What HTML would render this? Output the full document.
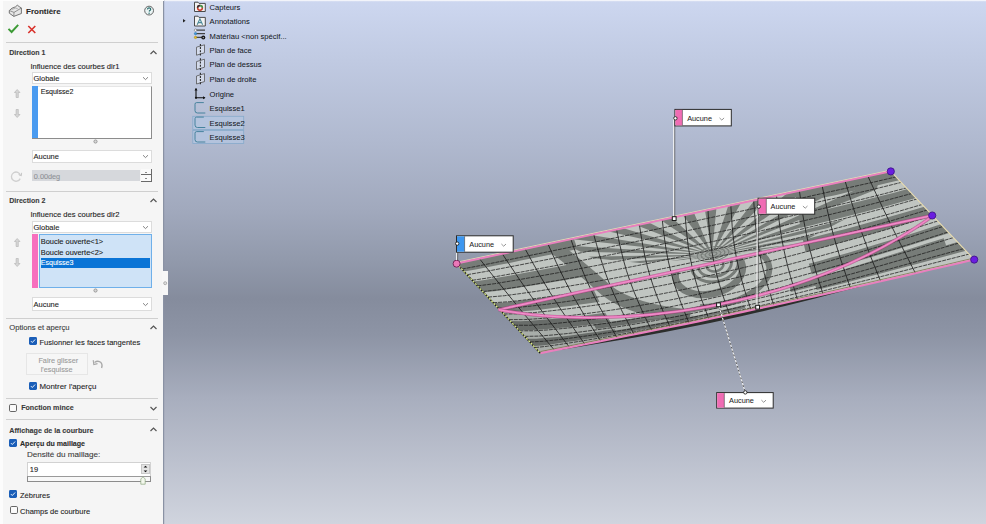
<!DOCTYPE html>
<html><head><meta charset="utf-8"><style>
html,body{margin:0;padding:0;width:986px;height:524px;overflow:hidden;background:#f4f4f4;}
.t{position:absolute;white-space:nowrap;font-family:'Liberation Sans',sans-serif;line-height:normal;-webkit-text-stroke:0.1px currentColor;}
.b{position:absolute;}
#vp{position:absolute;left:163px;top:0;width:823px;height:524px;overflow:hidden;}
</style></head><body>
<div id="vp"><svg width="823" height="524" viewBox="163 0 823 524" style="position:absolute;left:0;top:0">
<defs>
<linearGradient id="bg" x1="0" y1="0" x2="0" y2="524" gradientUnits="userSpaceOnUse">
<stop offset="0" stop-color="#cdd7f0"/>
<stop offset="0.115" stop-color="#c0cae2"/>
<stop offset="0.27" stop-color="#b0b9cf"/>
<stop offset="0.40" stop-color="#a1a9bd"/>
<stop offset="0.50" stop-color="#9199ab"/>
<stop offset="0.57" stop-color="#858c9d"/>
<stop offset="0.64" stop-color="#8d94a5"/>
<stop offset="0.76" stop-color="#a8aebe"/>
<stop offset="0.88" stop-color="#bcc1ce"/>
<stop offset="1" stop-color="#d0d4de"/>
</linearGradient>
<clipPath id="surf"><polygon points="456.6,263.5 890.8,171.4 974.2,259.6 959.7,263.0 945.3,266.4 930.8,269.7 916.3,273.1 901.9,276.5 887.4,279.8 873.0,283.1 858.5,286.4 844.0,289.7 829.6,293.0 815.1,296.2 800.6,299.4 786.2,302.6 771.7,305.8 757.2,308.9 742.8,312.0 728.3,315.1 713.9,318.1 699.4,321.2 684.9,324.2 670.5,327.1 656.0,330.1 641.5,333.0 627.1,335.9 612.6,338.9 598.2,341.7 583.7,344.6 569.2,347.5 554.8,350.3 540.3,353.2"/></clipPath>
</defs>
<rect x="163" y="0" width="823" height="524" fill="url(#bg)"/>
<rect x="163" y="0" width="823" height="1.2" fill="#f2f4fa"/>
<rect x="163" y="0" width="1.2" height="524" fill="#8a92a4"/>
<g clip-path="url(#surf)">
<rect x="440" y="160" width="546" height="200" fill="#c0c5c1"/>
<clipPath id="upper"><polygon points="566,244 580,160 885,160 872,205 800,243 712,258 640,263 592,258"/></clipPath>
<g clip-path="url(#upper)"><g transform="translate(712 254.5) rotate(-9) scale(1 0.36)"><path d="M0 0 L697.0 64.6 L688.1 128.6 Z M0 0 L673.3 191.6 L652.7 252.9 Z M0 0 L626.6 312.0 L595.2 368.5 Z M0 0 L558.6 421.8 L517.3 471.6 Z M0 0 L471.6 517.3 L421.8 558.6 Z M0 0 L368.5 595.2 L312.0 626.6 Z M0 0 L252.9 652.7 L191.6 673.3 Z M0 0 L128.6 688.1 L64.6 697.0 Z M0 0 L0.0 700.0 L-64.6 697.0 Z M0 0 L-128.6 688.1 L-191.6 673.3 Z M0 0 L-252.9 652.7 L-312.0 626.6 Z M0 0 L-368.5 595.2 L-421.8 558.6 Z M0 0 L-471.6 517.3 L-517.3 471.6 Z M0 0 L-558.6 421.8 L-595.2 368.5 Z M0 0 L-626.6 312.0 L-652.7 252.9 Z M0 0 L-673.3 191.6 L-688.1 128.6 Z M0 0 L-697.0 64.6 L-700.0 0.0 Z M0 0 L-697.0 -64.6 L-688.1 -128.6 Z M0 0 L-673.3 -191.6 L-652.7 -252.9 Z M0 0 L-626.6 -312.0 L-595.2 -368.5 Z M0 0 L-558.6 -421.8 L-517.3 -471.6 Z M0 0 L-471.6 -517.3 L-421.8 -558.6 Z M0 0 L-368.5 -595.2 L-312.0 -626.6 Z M0 0 L-252.9 -652.7 L-191.6 -673.3 Z M0 0 L-128.6 -688.1 L-64.6 -697.0 Z M0 0 L-0.0 -700.0 L64.6 -697.0 Z M0 0 L128.6 -688.1 L191.6 -673.3 Z M0 0 L252.9 -652.7 L312.0 -626.6 Z M0 0 L368.5 -595.2 L421.8 -558.6 Z M0 0 L471.6 -517.3 L517.3 -471.6 Z M0 0 L558.6 -421.8 L595.2 -368.5 Z M0 0 L626.6 -312.0 L652.7 -252.9 Z M0 0 L673.3 -191.6 L688.1 -128.6 Z M0 0 L697.0 -64.6 L700.0 -0.0 Z" fill="#777c78"/></g></g>
<ellipse cx="713" cy="254" rx="4.0" ry="1.75" fill="none" stroke="#777c78" stroke-width="1" transform="rotate(-10 713 254)"/>
<ellipse cx="713" cy="254" rx="8.0" ry="3.5" fill="none" stroke="#777c78" stroke-width="1" transform="rotate(-10 713 254)"/>
<ellipse cx="713" cy="254" rx="12.0" ry="5.25" fill="none" stroke="#777c78" stroke-width="1" transform="rotate(-10 713 254)"/>
<ellipse cx="713" cy="254" rx="16.0" ry="7.0" fill="none" stroke="#777c78" stroke-width="1" transform="rotate(-10 713 254)"/>
<path d="M456.6 263.5 L468.3 261.0 L480.0 258.5 L491.8 256.0 L503.5 253.6 L515.2 251.1 L526.9 248.6 L538.7 246.1 L550.4 243.6 L562.1 241.1 L573.8 238.6 L577.5 249.1 L566.1 251.5 L554.8 253.8 L543.5 256.1 L532.2 258.3 L520.9 260.6 L509.6 262.9 L498.3 265.1 L487.0 267.3 L475.6 269.5 L464.1 271.6Z M473.3 281.4 L484.6 279.9 L495.5 278.1 L506.4 276.2 L517.2 274.2 L528.0 272.3 L538.8 270.3 L549.6 268.2 L560.4 266.2 L571.2 264.1 L582.1 262.0 L587.6 276.0 L577.2 277.9 L566.8 279.7 L556.5 281.5 L546.2 283.3 L535.9 285.0 L525.6 286.6 L515.3 288.2 L504.8 289.8 L494.3 291.2 L483.4 292.2Z M493.4 303.0 L504.2 302.5 L514.3 301.5 L524.3 300.3 L534.3 299.0 L544.2 297.7 L554.0 296.3 L563.9 294.8 L573.8 293.3 L583.8 291.7 L593.8 290.0 L599.5 301.7 L589.8 303.2 L580.1 304.5 L570.5 305.9 L560.9 307.1 L551.3 308.3 L541.7 309.4 L532.1 310.4 L522.3 311.2 L512.4 311.9 L501.8 311.9Z M510.2 320.9 L520.6 321.2 L530.2 320.8 L539.7 320.1 L549.1 319.3 L558.4 318.4 L567.7 317.4 L577.1 316.4 L586.4 315.2 L595.8 314.0 L605.3 312.7 L610.4 321.9 L601.2 323.1 L592.0 324.3 L582.9 325.5 L573.9 326.5 L564.9 327.4 L555.8 328.3 L546.8 329.1 L537.7 329.7 L528.5 330.2 L518.5 329.9Z M526.9 338.8 L536.1 338.8 L544.8 338.1 L553.4 337.3 L562.0 336.4 L570.6 335.4 L579.3 334.3 L588.0 333.1 L596.8 331.9 L605.7 330.6 L614.7 329.3 L617.4 334.0 L608.6 335.5 L600.0 336.9 L591.4 338.3 L583.0 339.6 L574.6 340.9 L566.4 342.1 L558.2 343.3 L550.1 344.4 L541.9 345.4 L533.6 346.0Z" fill="#777c78"/>
<clipPath id="lower"><polygon points="600,288.5 800,245 800,340 600,340"/></clipPath>
<g clip-path="url(#lower)">
<ellipse cx="715" cy="265" rx="8.6" ry="6.3" fill="none" stroke="#777c78" stroke-width="2.6" transform="rotate(-12 715 265)"/>
<ellipse cx="715" cy="265" rx="16.6" ry="11.4" fill="none" stroke="#777c78" stroke-width="2.8" transform="rotate(-12 715 265)"/>
<ellipse cx="715" cy="265" rx="23.5" ry="16.6" fill="none" stroke="#777c78" stroke-width="3.0" transform="rotate(-12 715 265)"/>
<ellipse cx="709" cy="272" rx="34" ry="22" fill="none" stroke="#777c78" stroke-width="7" transform="rotate(-12 709 272)"/>
</g>
<clipPath id="lower3"><polygon points="700,300 760,250 900,250 900,340 700,340"/></clipPath>
<g clip-path="url(#lower3)"><ellipse cx="712" cy="276" rx="58" ry="30" fill="none" stroke="#777c78" stroke-width="6" transform="rotate(-10 712 276)"/></g>
<path d="M552 246 C570 258 590 276 606 290 C622 303 648 312 690 316" fill="none" stroke="#777c78" stroke-width="13"/>
<path d="M593.4 324.2 L601.9 323.1 L610.4 321.9 L619.0 320.6 L627.7 319.3 L636.5 317.9 L645.4 316.4 L654.4 314.8 L663.5 313.1 L672.7 311.4 L682.1 309.5 L691.6 307.6 L701.2 305.6 L711.0 303.4 L720.9 301.2 L731.1 298.9 L741.4 296.4 L742.9 301.2 L732.7 303.6 L722.6 305.9 L712.7 308.1 L702.9 310.2 L693.3 312.2 L683.9 314.1 L674.7 316.0 L665.5 317.7 L656.5 319.4 L647.6 321.0 L638.8 322.5 L630.2 323.9 L621.6 325.3 L613.1 326.5 L604.7 327.8 L596.3 328.9Z M598.9 333.1 L607.1 331.8 L615.4 330.6 L623.8 329.2 L632.2 327.8 L640.8 326.3 L649.5 324.8 L658.3 323.2 L667.2 321.5 L676.3 319.8 L685.5 317.9 L694.8 316.0 L704.4 314.0 L714.0 311.9 L723.9 309.7 L734.0 307.5 L744.2 305.1 L745.3 308.3 L735.0 310.6 L725.0 312.8 L715.2 314.9 L705.5 317.0 L696.0 319.0 L686.7 320.9 L677.6 322.7 L668.6 324.5 L659.7 326.2 L651.0 327.9 L642.4 329.5 L633.9 331.0 L625.6 332.5 L617.4 334.0 L609.2 335.3 L601.2 336.7Z" fill="#777c78"/>
<path d="M795.3 191.7 L804.8 189.6 L814.4 187.6 L823.9 185.6 L833.5 183.6 L843.0 181.5 L852.6 179.5 L862.1 177.5 L871.7 175.5 L881.2 173.4 L890.8 171.4 L899.1 180.2 L887.3 183.1 L876.8 185.6 L866.5 188.0 L856.4 190.3 L846.3 192.6 L836.3 194.9 L826.4 197.1 L816.5 199.3 L806.6 201.5 L796.8 203.7Z M798.5 215.8 L808.6 213.5 L818.7 211.1 L828.9 208.7 L839.2 206.2 L849.6 203.7 L860.2 201.2 L870.9 198.5 L881.9 195.8 L893.3 192.9 L907.5 189.0 L915.8 197.9 L899.4 202.6 L887.1 206.0 L875.4 209.0 L864.1 212.0 L853.1 214.8 L842.3 217.5 L831.6 220.2 L821.1 222.8 L810.8 225.4 L800.5 227.8Z M802.9 239.9 L813.3 237.3 L823.9 234.6 L834.6 231.8 L845.6 228.9 L856.7 225.9 L868.2 222.8 L880.0 219.6 L892.3 216.1 L905.5 212.3 L924.2 206.7 L932.5 215.5 L911.7 222.0 L897.6 226.3 L884.7 230.1 L872.4 233.6 L860.6 237.0 L849.1 240.2 L837.9 243.3 L826.9 246.3 L816.2 249.2 L805.6 252.0Z M808.8 263.8 L819.4 260.9 L830.2 257.8 L841.4 254.7 L852.8 251.4 L864.5 248.0 L876.7 244.3 L889.4 240.5 L902.9 236.4 L917.8 231.7 L940.8 224.3 L949.2 233.1 L923.8 241.1 L908.1 246.0 L894.0 250.3 L880.9 254.3 L868.3 258.0 L856.3 261.5 L844.7 264.9 L833.5 268.1 L822.5 271.2 L811.8 274.2Z M814.5 283.0 L825.2 280.0 L836.3 277.0 L847.8 273.8 L859.6 270.5 L871.9 267.0 L884.7 263.4 L898.3 259.4 L913.0 255.1 L929.6 250.2 L957.5 242.0 L965.9 250.8 L935.3 259.0 L917.7 263.7 L902.3 267.8 L888.2 271.6 L875.0 275.0 L862.5 278.3 L850.4 281.4 L838.8 284.4 L827.6 287.3 L816.7 290.0Z" fill="#777c78"/>
<path d="M790 288 C830 280 880 262 945 242" fill="none" stroke="#777c78" stroke-width="8"/>
</g>
<path d="M497 306 L540.3 353.2 L700 318 L690 314 Q600 330 497 306 Z" fill="#000" fill-opacity="0.12" clip-path="url(#surf)"/>
<path d="M479.5 258.7 L485.9 266.8 L492.3 274.9 L498.8 283.0 L505.4 291.1 L512.0 299.3 L518.6 307.4 L525.3 315.5 L531.8 323.2 L538.0 330.6 L543.9 337.6 L549.4 344.2 L554.7 350.4 M502.3 253.8 L508.0 262.4 L513.8 271.0 L519.6 279.6 L525.5 288.2 L531.5 296.7 L537.7 305.3 L544.0 313.9 L550.0 321.9 L555.6 329.2 L560.7 335.9 L565.4 342.0 L569.6 347.4 M525.2 249.0 L530.1 258.0 L535.1 267.0 L540.2 276.0 L545.5 285.0 L551.0 294.0 L556.7 303.0 L562.5 311.9 L568.0 320.1 L573.1 327.5 L577.6 334.0 L581.6 339.6 L584.9 344.4 M548.0 244.1 L552.2 253.5 L556.4 262.8 L560.9 272.2 L565.5 281.6 L570.4 291.0 L575.6 300.3 L581.0 309.6 L586.1 318.0 L590.7 325.4 L594.7 331.7 L598.1 337.0 L600.8 341.2 M570.9 239.3 L574.3 249.0 L577.8 258.7 L581.6 268.3 L585.6 278.0 L590.0 287.7 L594.7 297.4 L599.7 307.0 L604.4 315.6 L608.6 323.0 L612.1 329.2 L615.0 334.2 L617.2 337.9 M593.7 234.4 L596.5 244.4 L599.3 254.4 L602.5 264.3 L605.9 274.3 L609.7 284.3 L614.0 294.3 L618.5 304.1 L622.9 312.9 L626.7 320.3 L629.9 326.4 L632.4 331.1 L634.2 334.5 M616.6 229.6 L618.7 239.8 L621.0 250.0 L623.5 260.2 L626.4 270.4 L629.8 280.6 L633.6 290.8 L637.8 300.9 L641.7 309.8 L645.2 317.3 L648.1 323.3 L650.4 327.8 L651.9 330.9 M639.4 224.7 L641.0 235.1 L642.8 245.5 L644.8 255.9 L647.3 266.3 L650.2 276.7 L653.6 287.1 L657.4 297.4 L661.0 306.4 L664.2 313.9 L666.9 319.8 L668.9 324.3 L670.2 327.2 M662.3 219.9 L663.4 230.4 L664.8 240.9 L666.4 251.5 L668.5 262.0 L671.0 272.5 L674.0 283.0 L677.5 293.4 L680.8 302.5 L683.8 310.1 L686.2 316.1 L688.0 320.5 L689.2 323.3 M685.1 215.0 L686.0 225.6 L687.0 236.2 L688.3 246.8 L690.1 257.4 L692.3 268.0 L695.0 278.6 L698.1 289.1 L701.2 298.3 L704.0 305.9 L706.2 311.9 L707.9 316.3 L708.9 319.2 M708.0 210.2 L708.6 220.8 L709.5 231.4 L710.6 242.0 L712.1 252.6 L714.1 263.3 L716.5 273.9 L719.4 284.4 L722.3 293.6 L724.8 301.2 L726.9 307.3 L728.5 311.8 L729.6 314.8 M730.8 205.3 L731.5 215.9 L732.2 226.5 L733.2 237.0 L734.6 247.6 L736.5 258.2 L738.8 268.7 L741.5 279.2 L744.1 288.4 L746.5 296.1 L748.5 302.3 L750.1 307.0 L751.1 310.2 M753.7 200.5 L754.4 210.9 L755.2 221.4 L756.3 231.8 L757.7 242.3 L759.5 252.7 L761.7 263.2 L764.3 273.5 L766.8 282.7 L769.1 290.5 L771.1 296.8 L772.7 301.8 L773.8 305.3 M776.5 195.6 L777.5 205.9 L778.6 216.2 L779.8 226.4 L781.4 236.7 L783.3 246.9 L785.5 257.2 L788.0 267.4 L790.5 276.5 L792.8 284.3 L794.8 290.8 L796.4 296.1 L797.7 300.1 M799.4 190.8 L800.8 200.8 L802.2 210.8 L803.8 220.8 L805.7 230.8 L807.8 240.8 L810.2 250.8 L812.8 260.7 L815.4 269.7 L817.8 277.5 L819.9 284.3 L821.7 289.9 L823.1 294.4 M822.2 185.9 L824.2 195.6 L826.2 205.2 L828.4 214.9 L830.7 224.5 L833.2 234.2 L835.9 243.8 L838.8 253.4 L841.6 262.2 L844.3 270.1 L846.6 277.1 L848.7 283.1 L850.5 288.2 M845.1 181.1 L847.9 190.3 L850.7 199.5 L853.6 208.7 L856.7 217.9 L859.8 227.1 L863.1 236.3 L866.5 245.4 L869.7 254.0 L872.8 261.9 L875.7 269.1 L878.3 275.5 L880.7 281.3 M867.9 176.2 L871.9 184.8 L875.9 193.4 L880.0 202.0 L884.1 210.6 L888.2 219.2 L892.4 227.8 L896.7 236.4 L900.8 244.6 L904.8 252.4 L908.6 259.8 L912.1 266.7 L915.5 273.3" stroke="#161616" stroke-width="0.8" fill="none" clip-path="url(#surf)"/>
<path d="M461.8 269.1 L479.6 265.7 L497.3 262.1 L514.9 258.5 L532.6 254.9 L550.2 251.3 L567.9 247.7 L585.5 244.0 L603.2 240.3 L621.0 236.6 L638.7 232.9 L656.6 229.2 L674.4 225.4 L692.4 221.6 L710.4 217.7 L728.4 213.9 L746.6 210.0 L764.8 206.0 L783.0 202.1 L801.4 198.1 L819.8 194.0 L838.4 189.9 L857.0 185.8 L875.9 181.6 L896.0 176.9 M467.1 274.7 L484.6 271.7 L501.8 268.4 L519.0 265.1 L536.2 261.7 L553.4 258.3 L570.6 254.9 L587.9 251.4 L605.2 247.9 L622.6 244.3 L640.0 240.7 L657.6 237.0 L675.2 233.3 L693.0 229.5 L710.9 225.7 L728.9 221.8 L747.1 217.8 L765.4 213.8 L783.9 209.7 L802.5 205.6 L821.2 201.3 L840.2 197.0 L859.5 192.5 L879.2 187.9 L901.2 182.4 M472.3 280.3 L489.5 277.7 L506.4 274.7 L523.1 271.7 L539.9 268.5 L556.7 265.4 L573.4 262.1 L590.3 258.8 L607.2 255.4 L624.3 252.0 L641.4 248.5 L658.7 244.9 L676.2 241.2 L693.8 237.5 L711.6 233.7 L729.6 229.7 L747.8 225.7 L766.2 221.6 L784.8 217.4 L803.6 213.1 L822.7 208.6 L842.1 204.0 L861.9 199.3 L882.4 194.2 L906.4 187.9 M477.5 285.9 L494.5 283.7 L511.0 281.0 L527.3 278.2 L543.7 275.3 L560.0 272.4 L576.4 269.3 L592.9 266.2 L609.5 263.0 L626.2 259.7 L643.0 256.3 L660.1 252.8 L677.3 249.2 L694.8 245.4 L712.5 241.6 L730.4 237.7 L748.6 233.6 L767.0 229.4 L785.8 225.0 L804.8 220.5 L824.3 215.9 L844.1 211.1 L864.4 206.0 L885.7 200.5 L911.7 193.5 M482.8 291.5 L499.5 289.7 L515.6 287.3 L531.6 284.8 L547.5 282.1 L563.5 279.4 L579.5 276.5 L595.6 273.6 L611.9 270.5 L628.3 267.4 L644.9 264.1 L661.7 260.6 L678.7 257.1 L696.0 253.4 L713.5 249.6 L731.4 245.6 L749.6 241.5 L768.1 237.2 L787.0 232.7 L806.2 228.0 L825.9 223.2 L846.1 218.1 L867.0 212.7 L889.0 206.9 L916.9 199.0 M488.0 297.1 L504.5 295.7 L520.3 293.6 L535.9 291.4 L551.5 288.9 L567.1 286.4 L582.8 283.8 L598.6 281.0 L614.5 278.1 L630.6 275.0 L646.9 271.8 L663.5 268.5 L680.3 265.0 L697.4 261.4 L714.9 257.5 L732.7 253.5 L750.8 249.3 L769.3 244.9 L788.3 240.3 L807.7 235.5 L827.7 230.5 L848.2 225.1 L869.6 219.4 L892.3 213.2 L922.1 204.5 M493.2 302.7 L509.5 301.7 L525.0 299.9 L540.3 297.9 L555.6 295.7 L570.9 293.4 L586.2 291.0 L601.7 288.4 L617.4 285.6 L633.2 282.7 L649.3 279.6 L665.6 276.4 L682.2 272.9 L699.2 269.3 L716.5 265.5 L734.2 261.5 L752.3 257.2 L770.8 252.7 L789.8 248.0 L809.4 243.0 L829.5 237.7 L850.4 232.2 L872.2 226.2 L895.6 219.5 L927.3 210.0 M498.4 308.4 L514.6 307.7 L529.8 306.2 L544.8 304.5 L559.8 302.5 L574.8 300.4 L589.9 298.2 L605.1 295.8 L620.5 293.2 L636.1 290.4 L651.9 287.4 L668.0 284.3 L684.4 280.9 L701.2 277.3 L718.4 273.5 L736.0 269.4 L754.0 265.1 L772.5 260.5 L791.6 255.6 L811.2 250.5 L831.5 245.0 L852.7 239.2 L874.9 232.9 L899.0 225.9 L932.5 215.5 M503.7 314.0 L519.7 313.8 L534.6 312.5 L549.4 311.0 L564.1 309.3 L578.9 307.4 L593.7 305.4 L608.7 303.1 L623.8 300.7 L639.1 298.0 L654.8 295.2 L670.7 292.1 L686.9 288.8 L703.5 285.2 L720.5 281.4 L738.0 277.3 L755.9 272.9 L774.4 268.3 L793.4 263.3 L813.2 258.0 L833.7 252.3 L855.1 246.2 L877.7 239.6 L902.4 232.2 L937.7 221.0 M508.9 319.6 L524.7 319.6 L539.4 318.6 L553.9 317.3 L568.4 315.8 L582.8 314.0 L597.4 312.1 L612.2 310.0 L627.1 307.7 L642.2 305.1 L657.6 302.4 L673.3 299.4 L689.4 296.1 L705.8 292.6 L722.7 288.7 L740.0 284.6 L757.9 280.2 L776.3 275.5 L795.4 270.4 L815.2 265.0 L835.8 259.2 L857.4 253.0 L880.4 246.1 L905.7 238.4 L942.9 226.5 M514.1 325.2 L529.5 325.3 L543.9 324.4 L558.1 323.2 L572.3 321.7 L586.6 320.1 L600.9 318.2 L615.4 316.2 L630.1 313.9 L645.0 311.4 L660.3 308.7 L675.8 305.7 L691.7 302.5 L708.0 299.0 L724.7 295.2 L742.0 291.1 L759.8 286.7 L778.1 282.0 L797.2 276.9 L817.1 271.4 L837.8 265.6 L859.7 259.2 L883.1 252.3 L909.0 244.4 L948.1 232.0 M519.4 330.8 L534.3 330.8 L548.3 329.9 L562.1 328.6 L576.0 327.2 L590.0 325.5 L604.1 323.6 L618.3 321.6 L632.8 319.3 L647.6 316.9 L662.6 314.2 L678.0 311.2 L693.8 308.0 L710.0 304.6 L726.6 300.8 L743.8 296.8 L761.5 292.4 L779.8 287.7 L798.9 282.7 L818.8 277.2 L839.7 271.4 L861.8 265.1 L885.6 258.1 L912.2 250.2 L953.4 237.6 M524.6 336.4 L538.8 336.1 L552.4 335.0 L565.9 333.7 L579.4 332.1 L593.0 330.3 L606.9 328.4 L620.9 326.3 L635.2 324.0 L649.8 321.5 L664.7 318.8 L679.9 315.9 L695.6 312.7 L711.7 309.2 L728.2 305.5 L745.3 301.5 L763.0 297.3 L781.4 292.7 L800.5 287.7 L820.5 282.4 L841.5 276.7 L863.8 270.5 L888.0 263.6 L915.2 255.8 L958.6 243.1 M529.8 342.0 L543.3 341.3 L556.3 339.9 L569.3 338.3 L582.4 336.5 L595.8 334.6 L609.3 332.5 L623.1 330.3 L637.2 327.9 L651.6 325.3 L666.4 322.6 L681.5 319.6 L697.1 316.4 L713.1 313.0 L729.6 309.4 L746.6 305.5 L764.3 301.3 L782.7 296.9 L801.8 292.1 L821.9 287.0 L843.1 281.4 L865.7 275.4 L890.3 268.8 L918.2 261.1 L963.8 248.6 M535.1 347.6 L547.5 346.2 L559.9 344.4 L572.4 342.5 L585.2 340.4 L598.1 338.3 L611.4 336.0 L625.0 333.6 L638.8 331.0 L653.1 328.3 L667.7 325.5 L682.7 322.5 L698.2 319.3 L714.1 315.9 L730.6 312.3 L747.6 308.6 L765.3 304.6 L783.7 300.3 L803.0 295.7 L823.2 290.9 L844.5 285.6 L867.4 280.0 L892.4 273.7 L921.1 266.3 L969.0 254.1" stroke="#1c1c1c" stroke-width="0.75" fill="none" stroke-dasharray="4 0.9" clip-path="url(#surf)"/>
<path d="M560.0 349.3 L575.0 346.3 L590.0 343.4 L605.0 340.4 L620.0 337.4 L635.0 334.4 L650.0 331.3 L665.0 328.3 L680.0 325.2 L695.0 322.1 L710.0 318.9 L725.0 315.8 L740.0 312.6 L755.0 309.4 L770.0 306.1 L785.0 302.9 L800.0 299.6 L815.0 296.2 L830.0 292.9 L845.0 289.5 L860.0 286.1 L860.0 286.7 L845.0 290.6 L830.0 294.5 L815.0 298.4 L800.0 302.2 L785.0 305.9 L770.0 309.6 L755.0 313.1 L740.0 316.5 L725.0 319.8 L710.0 323.0 L695.0 326.1 L680.0 329.1 L665.0 332.0 L650.0 334.8 L635.0 337.4 L620.0 340.0 L605.0 342.6 L590.0 345.0 L575.0 347.5 L560.0 349.9Z" fill="#2c2e2c"/>
<path d="M456.6 262.3 L890.8 170.20000000000002" stroke="#ece2b4" stroke-width="0.9"/>
<path d="M456.6 263.5 L890.8 171.4" stroke="#ea7fbe" stroke-width="1.9"/>
<path d="M890.8 171.4 L974.2 259.6" stroke="#e8dcae" stroke-width="1.1"/>
<path d="M540.3 351.6 L554.8 348.7 L569.2 345.9 L583.7 343.0 L598.2 340.1 L612.6 337.2 L627.1 334.3 L641.5 331.4 L656.0 328.5 L670.5 325.5 L684.9 322.6 L699.4 319.6 L713.9 316.5 L728.3 313.5 L742.8 310.4 L757.2 307.3 L771.7 304.2 L786.2 301.0 L800.6 297.8 L815.1 294.6 L829.6 291.4 L844.0 288.1 L858.5 284.8 L873.0 281.5 L887.4 278.2 L901.9 274.9 L916.3 271.5 L930.8 268.1 L945.3 264.8 L959.7 261.4 L974.2 258.0" stroke="#7a6a40" stroke-width="0.7" fill="none"/>
<path d="M540.3 353.2 L554.8 350.3 L569.2 347.5 L583.7 344.6 L598.2 341.7 L612.6 338.9 L627.1 335.9 L641.5 333.0 L656.0 330.1 L670.5 327.1 L684.9 324.2 L699.4 321.2 L713.9 318.1 L728.3 315.1 L742.8 312.0 L757.2 308.9 L771.7 305.8 L786.2 302.6 L800.6 299.4 L815.1 296.2 L829.6 293.0 L844.0 289.7 L858.5 286.4 L873.0 283.1 L887.4 279.8 L901.9 276.5 L916.3 273.1 L930.8 269.7 L945.3 266.4 L959.7 263.0 L974.2 259.6" stroke="#ea7fbe" stroke-width="1.9" fill="none"/>
<path d="M456.6 263.5 L540.3 353.2" stroke="#1a1a10" stroke-width="1.3"/>
<path d="M456.6 263.5 L540.3 353.2" stroke="#d8e888" stroke-width="1.3" stroke-dasharray="2 1.4"/>
<path d="M498.7 309.7 L932.2 215.5" stroke="#8a3a6a" stroke-width="3.4" fill="none" stroke-opacity="0.55"/>
<path d="M498.7 309.7 L932.2 215.5" stroke="#e26eb4" stroke-width="2.6" fill="none"/>
<path d="M498.7 309.7 L932.2 215.5" stroke="#f096cc" stroke-width="1.0" fill="none"/>
<path d="M498.7 309.7 C612 331.6 801.2 310.3 932.4 216.3" stroke="#8a3a6a" stroke-width="3.4" fill="none" stroke-opacity="0.55"/>
<path d="M498.7 309.7 C612 331.6 801.2 310.3 932.4 216.3" stroke="#e26eb4" stroke-width="2.6" fill="none"/>
<path d="M498.7 309.7 C612 331.6 801.2 310.3 932.4 216.3" stroke="#f096cc" stroke-width="1.0" fill="none"/>
<circle cx="890.8" cy="171.4" r="3.6" fill="#6a1ee0" stroke="#3a1080" stroke-width="0.8"/>
<circle cx="932.2" cy="215.5" r="3.6" fill="#6a1ee0" stroke="#3a1080" stroke-width="0.8"/>
<circle cx="974.2" cy="259.6" r="3.6" fill="#6a1ee0" stroke="#3a1080" stroke-width="0.8"/>
<circle cx="456.6" cy="263.7" r="3.5" fill="#ec78b8" stroke="#6a2050" stroke-width="0.9"/>
<rect x="192.8" y="116.3" width="50.9" height="13.100000000000009" fill="#b4c6e0" fill-opacity="0.8" stroke="#86aacb" stroke-width="0.8"/>
<rect x="192.8" y="130.4" width="50.9" height="13.099999999999994" fill="#b4c6e0" fill-opacity="0.8" stroke="#86aacb" stroke-width="0.8"/>
<text x="209.6" y="10.0" font-family="Liberation Sans" font-size="7.6" fill="#14181e" stroke="#14181e" stroke-width="0.04" >Capteurs</text>
<text x="209.6" y="23.9" font-family="Liberation Sans" font-size="7.6" fill="#14181e" stroke="#14181e" stroke-width="0.04" >Annotations</text>
<text x="209.6" y="38.8" font-family="Liberation Sans" font-size="7.6" fill="#14181e" stroke="#14181e" stroke-width="0.04" >Matériau &lt;non spécif...</text>
<text x="209.6" y="53.0" font-family="Liberation Sans" font-size="7.6" fill="#14181e" stroke="#14181e" stroke-width="0.04" >Plan de face</text>
<text x="209.6" y="67.3" font-family="Liberation Sans" font-size="7.6" fill="#14181e" stroke="#14181e" stroke-width="0.04" >Plan de dessus</text>
<text x="209.6" y="81.5" font-family="Liberation Sans" font-size="7.6" fill="#14181e" stroke="#14181e" stroke-width="0.04" >Plan de droite</text>
<text x="209.6" y="96.7" font-family="Liberation Sans" font-size="7.6" fill="#14181e" stroke="#14181e" stroke-width="0.04" >Origine</text>
<text x="209.6" y="111.0" font-family="Liberation Sans" font-size="7.6" fill="#14181e" stroke="#14181e" stroke-width="0.04" >Esquisse1</text>
<text x="209.6" y="125.7" font-family="Liberation Sans" font-size="7.6" fill="#14181e" stroke="#14181e" stroke-width="0.04" >Esquisse2</text>
<text x="209.6" y="140.4" font-family="Liberation Sans" font-size="7.6" fill="#14181e" stroke="#14181e" stroke-width="0.04" >Esquisse3</text>
<g transform="translate(194 1.2)">
<path d="M0.5 1 L4 1 L5 2.2 L11.3 2.2 L11.3 10.3 L0.5 10.3 Z" fill="#f2f2f2" stroke="#4a4a4a" stroke-width="1"/>
<circle cx="6" cy="6.6" r="2.4" fill="none" stroke="#cc3a2a" stroke-width="1.5"/>
<path d="M6 4.2 A2.4 2.4 0 0 1 8.4 6.6" fill="none" stroke="#3aa050" stroke-width="1.5"/>
<path d="M3.6 6.6 A2.4 2.4 0 0 1 6 4.2" fill="none" stroke="#333" stroke-width="1.5"/>
</g>
<g transform="translate(194 15.2)">
<path d="M0.5 1 L4 1 L5 2.2 L11.3 2.2 L11.3 10.8 L0.5 10.8 Z" fill="#f2f2f2" stroke="#4a4a4a" stroke-width="1"/>
<path d="M3.2 9.6 L5.9 3.6 L8.6 9.6 M4.3 7.4 L7.5 7.4" fill="none" stroke="#4a8898" stroke-width="1.1"/>
</g>
<path d="M183 19 L185.6 20.8 L183 22.6 Z" fill="#222"/>
<g transform="translate(193.5 29)">
<path d="M2 1.2 L11.5 1.2 M2 4.6 L11.5 4.6 M2 8.4 L9 8.4" stroke="#444" stroke-width="1.3"/>
<circle cx="2" cy="1.2" r="1.2" fill="#fff" stroke="#666" stroke-width="0.6"/>
<circle cx="2" cy="4.6" r="1.2" fill="#3a9ae0" stroke="#2a6aa0" stroke-width="0.5"/>
<circle cx="2" cy="8.4" r="1.2" fill="#e8c020" stroke="#a08010" stroke-width="0.5"/>
<circle cx="9.8" cy="8.6" r="2" fill="#1a1a1a"/>
<circle cx="9.8" cy="8.6" r="0.7" fill="#bbb"/>
</g>
<g transform="translate(196 44.2)">
<path d="M0.5 3 L8.5 0.6 L8.5 8.6 L0.5 11 Z" fill="#e8ecf4" fill-opacity="0.5" stroke="#555" stroke-width="0.8"/>
<path d="M4.4 -0.3 L4.4 12" stroke="#2a2a2a" stroke-width="1.1" stroke-dasharray="2 1.2"/>
</g>
<g transform="translate(196 58.6)">
<path d="M0.5 3 L8.5 0.6 L8.5 8.6 L0.5 11 Z" fill="#e8ecf4" fill-opacity="0.5" stroke="#555" stroke-width="0.8"/>
<path d="M4.4 -0.3 L4.4 12" stroke="#2a2a2a" stroke-width="1.1" stroke-dasharray="2 1.2"/>
</g>
<g transform="translate(196 73.0)">
<path d="M0.5 3 L8.5 0.6 L8.5 8.6 L0.5 11 Z" fill="#e8ecf4" fill-opacity="0.5" stroke="#555" stroke-width="0.8"/>
<path d="M4.4 -0.3 L4.4 12" stroke="#2a2a2a" stroke-width="1.1" stroke-dasharray="2 1.2"/>
</g>
<g transform="translate(194.5 88)">
<path d="M1.5 0.5 L1.5 9.8 L10.5 9.8" fill="none" stroke="#111" stroke-width="1.1"/>
<path d="M0 2.5 L1.5 0 L3 2.5 Z M8.5 8.3 L11 9.8 L8.5 11.3 Z" fill="#111"/>
<circle cx="1.5" cy="9.8" r="1.1" fill="#111"/>
</g>
<path d="M203.8 102.6 L196.5 102.6 Q195 102.6 195 104.2 L195 110.6 Q195 113 197.5 113 L205.3 113" fill="none" stroke="#3a7c96" stroke-width="0.9"/>
<path d="M203.8 117.1 L196.5 117.1 Q195 117.1 195 118.7 L195 125.1 Q195 127.5 197.5 127.5 L205.3 127.5" fill="none" stroke="#3a7c96" stroke-width="0.9"/>
<path d="M203.8 131.6 L196.5 131.6 Q195 131.6 195 133.2 L195 139.6 Q195 142 197.5 142 L205.3 142" fill="none" stroke="#3a7c96" stroke-width="0.9"/>
<path d="M674.70 118.30 L674.70 217.50" stroke="#3a3a3a" stroke-width="0.8"/>
<path d="M673.7 118.3 L673.7 217.5" stroke="#f6f6f6" stroke-width="1.1"/>
<path d="M758.20 206.60 L758.00 306.50" stroke="#3a3a3a" stroke-width="0.8"/>
<path d="M757.2 206.6 L757.0 306.5" stroke="#f6f6f6" stroke-width="1.1"/>
<path d="M718.5 304.8 L745.3 392.4" stroke="#f4f4f4" stroke-width="1.1"/>
<path d="M718.5 304.8 L745.3 392.4" stroke="#303030" stroke-width="0.8" stroke-dasharray="1.8 2.2"/>
<path d="M457.80 243.61 L457.60 260.01" stroke="#3a3a3a" stroke-width="0.8"/>
<path d="M456.8 243.6 L456.6 260" stroke="#f6f6f6" stroke-width="1.1"/>
<rect x="672.3000000000001" y="216.7" width="3.8" height="3.8" fill="#fafafa" stroke="#1a1a1a" stroke-width="1"/>
<rect x="755.7" y="305.3" width="3.8" height="3.8" fill="#fafafa" stroke="#1a1a1a" stroke-width="1"/>
<rect x="716.6" y="302.90000000000003" width="3.8" height="3.8" fill="#fafafa" stroke="#1a1a1a" stroke-width="1"/>
<rect x="674.9" y="109.4" width="56.39999999999998" height="16.5" fill="#fff" stroke="#2a2a2a" stroke-width="1"/>
<rect x="675.4" y="109.9" width="7" height="15.5" fill="#f06cb4"/>
<path d="M682.4 109.9 L682.4 125.4" stroke="#444" stroke-width="0.6"/>
<text x="687.2" y="120.7" font-family="Liberation Sans" font-size="7.3" fill="#222" stroke="#222" stroke-width="0.04" >Aucune</text>
<path d="M719.5 117.9 L721.8 120.1 L724.1 117.9" fill="none" stroke="#666" stroke-width="0.7"/>
<circle cx="675.4" cy="118.3" r="1.7" fill="#fff" stroke="#222" stroke-width="0.9"/>
<rect x="758.1" y="198.2" width="56.60000000000002" height="16.0" fill="#fff" stroke="#2a2a2a" stroke-width="1"/>
<rect x="758.6" y="198.7" width="7.699999999999999" height="15.0" fill="#f06cb4"/>
<path d="M766.3000000000001 198.7 L766.3000000000001 213.7" stroke="#444" stroke-width="0.6"/>
<text x="770.6" y="208.8" font-family="Liberation Sans" font-size="7.3" fill="#222" stroke="#222" stroke-width="0.04" >Aucune</text>
<path d="M802.9 206.0 L805.2 208.2 L807.5 206.0" fill="none" stroke="#666" stroke-width="0.7"/>
<circle cx="758.8" cy="206.6" r="1.7" fill="#fff" stroke="#222" stroke-width="0.9"/>
<rect x="716.7" y="392.6" width="56.5" height="15.5" fill="#fff" stroke="#2a2a2a" stroke-width="1"/>
<rect x="717.2" y="393.1" width="7.1" height="14.5" fill="#f06cb4"/>
<path d="M724.3000000000001 393.1 L724.3000000000001 407.6" stroke="#444" stroke-width="0.6"/>
<text x="729.1" y="402.9" font-family="Liberation Sans" font-size="7.3" fill="#222" stroke="#222" stroke-width="0.04" >Aucune</text>
<path d="M761.4 400.1 L763.7 402.3 L766.0 400.1" fill="none" stroke="#666" stroke-width="0.7"/>
<circle cx="745.3" cy="392.4" r="1.7" fill="#fff" stroke="#222" stroke-width="0.9"/>
<rect x="456.5" y="235.8" width="56.700000000000045" height="16.399999999999977" fill="#fff" stroke="#2a2a2a" stroke-width="1"/>
<rect x="457" y="236.3" width="7.6" height="15.399999999999977" fill="#3d97f0"/>
<path d="M464.6 236.3 L464.6 251.7" stroke="#444" stroke-width="0.6"/>
<text x="469.3" y="246.8" font-family="Liberation Sans" font-size="7.3" fill="#222" stroke="#222" stroke-width="0.04" >Aucune</text>
<path d="M501.4 244.0 L503.7 246.2 L506.0 244.0" fill="none" stroke="#666" stroke-width="0.7"/>
<circle cx="457.2" cy="243.6" r="1.7" fill="#fff" stroke="#222" stroke-width="0.9"/>
</svg></div>
<div class="b" style="left:0.00px;top:0.00px;width:163.00px;height:524.00px;background:#f5f5f5;"></div>
<div class="b" style="left:0.00px;top:0.00px;width:2.50px;height:524.00px;background:#fcfcfc;"></div>
<div class="b" style="left:0.00px;top:0.00px;width:163.50px;height:1.30px;background:#fdfdfd;"></div>
<div class="b" style="left:6.30px;top:41.80px;width:152.00px;height:1.10px;background:#cfcfcf;"></div>
<div class="b" style="left:6.30px;top:190.90px;width:152.00px;height:1.10px;background:#cfcfcf;"></div>
<div class="b" style="left:6.30px;top:317.80px;width:152.00px;height:1.10px;background:#cfcfcf;"></div>
<div class="b" style="left:6.30px;top:397.90px;width:152.00px;height:1.10px;background:#cfcfcf;"></div>
<div class="b" style="left:6.30px;top:419.10px;width:152.00px;height:1.10px;background:#cfcfcf;"></div>
<div class="t" style="left:26.00px;top:6.96px;font-size:8.0px;color:#2a2a2a;font-weight:bold;">Frontière</div>
<svg class="b" style="left:0px;top:0px" width="26" height="20" viewBox="0 0 26 20">
<path d="M9.3 10.5 L12 8.2 L15.5 6.8 L17.3 5.2 L19.2 6.6 L21.4 8 L21.4 13.5 L13.8 16.4 L9.3 13.2 Z" fill="#e6e6e6" stroke="#666" stroke-width="0.9" stroke-linejoin="round"/>
<path d="M9.3 10.5 L14 12.4 L21.4 8 M14 12.4 L13.8 16.4" fill="none" stroke="#7a7a7a" stroke-width="0.8"/>
<path d="M11.5 9.6 L15.5 8 L17.8 8.8" fill="none" stroke="#9a9a9a" stroke-width="0.7"/>
</svg>
<svg class="b" style="left:143px;top:5px" width="12" height="12" viewBox="0 0 12 12">
<circle cx="6.1" cy="5.6" r="4.4" fill="#eaf4f4" stroke="#555" stroke-width="0.9"/>
<path d="M4.4 4.4 Q4.6 2.9 6.1 2.9 Q7.7 2.9 7.7 4.3 Q7.7 5.2 6.5 5.7 L6.2 6.5" fill="none" stroke="#2f6f6f" stroke-width="1.2"/>
<circle cx="6.1" cy="8.2" r="0.7" fill="#2f6f6f"/>
</svg>
<svg class="b" style="left:7px;top:23px" width="13" height="11" viewBox="0 0 13 11">
<path d="M1.5 5.8 L4.6 9 L11.2 1.8" fill="none" stroke="#3c9a35" stroke-width="1.9"/></svg>
<svg class="b" style="left:26.5px;top:24.7px" width="10" height="9" viewBox="0 0 10 9">
<path d="M1.3 1 L8.3 8 M8.3 1 L1.3 8" fill="none" stroke="#d9312b" stroke-width="1.6"/></svg>
<div class="t" style="left:9.20px;top:48.56px;font-size:7.0px;color:#3a3a3a;font-weight:bold;">Direction 1</div>
<svg class="b" style="left:149.7px;top:49.5px" width="7" height="5" viewBox="0 0 7 5"><path d="M0.5 4 L3.5 1 L6.5 4" fill="none" stroke="#555" stroke-width="1.2"/></svg>
<div class="t" style="left:30.40px;top:61.52px;font-size:7.6px;color:#222;">Influence des courbes dir1</div>
<div class="b" style="left:31.50px;top:71.50px;width:120.00px;height:12.80px;background:#fff;border:1px solid #dcdcdc;box-sizing:border-box;"></div>
<div class="t" style="left:33.50px;top:74.31px;font-size:7.5px;color:#1e1e1e;">Globale</div>
<svg class="b" style="left:142.3px;top:76.0px" width="7" height="5" viewBox="0 0 7 5"><path d="M1 1.2 L3.5 3.6 L6 1.2" fill="none" stroke="#666" stroke-width="0.8"/></svg>
<div class="b" style="left:31.50px;top:85.80px;width:120.20px;height:53.00px;background:#fff;border-right:1px solid #8c8c8c;border-bottom:1px solid #8c8c8c;border-top:1px solid #e6e6e6;box-sizing:border-box;"></div>
<div class="b" style="left:31.50px;top:85.80px;width:6.90px;height:52.00px;background:#4a9bf0;"></div>
<div class="t" style="left:40.70px;top:88.32px;font-size:7.1px;color:#1a1a1a;">Esquisse2</div>
<svg class="b" style="left:13.5px;top:88.5px" width="7" height="9" viewBox="0 0 7 9"><path d="M3.2 0.5 L6 3.5 L4.3 3.5 L4.3 8.5 L2.1 8.5 L2.1 3.5 L0.4 3.5 Z" fill="#d6d6d6" stroke="#b0b0b0" stroke-width="0.6"/></svg>
<svg class="b" style="left:13.5px;top:108.5px" width="7" height="9" viewBox="0 0 7 9"><path d="M3.2 8.5 L6 5.5 L4.3 5.5 L4.3 0.5 L2.1 0.5 L2.1 5.5 L0.4 5.5 Z" fill="#d6d6d6" stroke="#b0b0b0" stroke-width="0.6"/></svg>
<svg class="b" style="left:92.5px;top:139.2px" width="5" height="5" viewBox="0 0 5 5"><circle cx="2.5" cy="2.5" r="1.6" fill="#d8d8d8" stroke="#8a8a8a" stroke-width="0.8"/></svg>
<div class="b" style="left:31.50px;top:149.60px;width:120.00px;height:13.50px;background:#fff;border:1px solid #dcdcdc;box-sizing:border-box;"></div>
<div class="t" style="left:33.50px;top:152.41px;font-size:7.5px;color:#1e1e1e;">Aucune</div>
<svg class="b" style="left:142.3px;top:154.1px" width="7" height="5" viewBox="0 0 7 5"><path d="M1 1.2 L3.5 3.6 L6 1.2" fill="none" stroke="#666" stroke-width="0.8"/></svg>
<div class="b" style="left:31.50px;top:170.00px;width:108.50px;height:10.50px;background:#d6d8dc;"></div>
<div class="t" style="left:33.80px;top:171.59px;font-size:7.3px;color:#8e9196;">0.00deg</div>
<div class="b" style="left:141.00px;top:169.00px;width:11.10px;height:12.60px;background:#fafafa;border-right:1px solid #6a6a6a;border-bottom:1px solid #6a6a6a;box-sizing:border-box;"></div>
<div class="b" style="left:141.00px;top:174.20px;width:10.20px;height:1.00px;background:#6a6a6a;"></div>
<div class="b" style="left:145.30px;top:171.90px;width:1.90px;height:0.80px;background:#8a8a8a;"></div>
<div class="b" style="left:145.30px;top:178.10px;width:1.90px;height:0.80px;background:#8a8a8a;"></div>
<svg class="b" style="left:10px;top:170px" width="13" height="13" viewBox="0 0 13 13">
<path d="M10.5 5.5 A4.6 4.6 0 1 0 10.2 8.6" fill="none" stroke="#cfcfcf" stroke-width="1.3"/>
<path d="M8.6 4.6 L11.4 5.8 L11.6 2.8" fill="none" stroke="#c8c8c8" stroke-width="1"/></svg>
<div class="t" style="left:9.20px;top:197.06px;font-size:7.0px;color:#3a3a3a;font-weight:bold;">Direction 2</div>
<svg class="b" style="left:149.7px;top:198.2px" width="7" height="5" viewBox="0 0 7 5"><path d="M0.5 4 L3.5 1 L6.5 4" fill="none" stroke="#555" stroke-width="1.2"/></svg>
<div class="t" style="left:30.40px;top:210.12px;font-size:7.6px;color:#222;">Influence des courbes dir2</div>
<div class="b" style="left:31.50px;top:220.60px;width:120.00px;height:12.80px;background:#fff;border:1px solid #dcdcdc;box-sizing:border-box;"></div>
<div class="t" style="left:33.50px;top:223.41px;font-size:7.5px;color:#1e1e1e;">Globale</div>
<svg class="b" style="left:142.3px;top:225.1px" width="7" height="5" viewBox="0 0 7 5"><path d="M1 1.2 L3.5 3.6 L6 1.2" fill="none" stroke="#666" stroke-width="0.8"/></svg>
<div class="b" style="left:31.50px;top:234.40px;width:6.90px;height:53.20px;background:#f76fbe;"></div>
<div class="b" style="left:38.60px;top:234.40px;width:113.00px;height:53.20px;background:#cfe3f7;border:1px solid #6fb0ea;box-sizing:border-box;"></div>
<div class="t" style="left:40.70px;top:237.26px;font-size:7.45px;color:#1a1a1a;">Boucle ouverte&lt;1&gt;</div>
<div class="t" style="left:40.70px;top:247.66px;font-size:7.45px;color:#1a1a1a;">Boucle ouverte&lt;2&gt;</div>
<div class="b" style="left:41.00px;top:258.00px;width:108.80px;height:9.80px;background:#0a74d6;"></div>
<div class="t" style="left:40.70px;top:258.57px;font-size:7.1px;color:#ffffff;">Esquisse3</div>
<svg class="b" style="left:13.5px;top:237.5px" width="7" height="9" viewBox="0 0 7 9"><path d="M3.2 0.5 L6 3.5 L4.3 3.5 L4.3 8.5 L2.1 8.5 L2.1 3.5 L0.4 3.5 Z" fill="#d6d6d6" stroke="#b0b0b0" stroke-width="0.6"/></svg>
<svg class="b" style="left:13.5px;top:257.8px" width="7" height="9" viewBox="0 0 7 9"><path d="M3.2 8.5 L6 5.5 L4.3 5.5 L4.3 0.5 L2.1 0.5 L2.1 5.5 L0.4 5.5 Z" fill="#d6d6d6" stroke="#b0b0b0" stroke-width="0.6"/></svg>
<svg class="b" style="left:92.5px;top:288.2px" width="5" height="5" viewBox="0 0 5 5"><circle cx="2.5" cy="2.5" r="1.6" fill="#d8d8d8" stroke="#8a8a8a" stroke-width="0.8"/></svg>
<div class="b" style="left:31.50px;top:297.00px;width:120.00px;height:14.20px;background:#fff;border:1px solid #dcdcdc;box-sizing:border-box;"></div>
<div class="t" style="left:33.50px;top:299.81px;font-size:7.5px;color:#1e1e1e;">Aucune</div>
<svg class="b" style="left:142.3px;top:301.5px" width="7" height="5" viewBox="0 0 7 5"><path d="M1 1.2 L3.5 3.6 L6 1.2" fill="none" stroke="#666" stroke-width="0.8"/></svg>
<div class="t" style="left:9.20px;top:323.48px;font-size:7.65px;color:#3c3c3c;">Options et aperçu</div>
<svg class="b" style="left:149.7px;top:324.8px" width="7" height="5" viewBox="0 0 7 5"><path d="M0.5 4 L3.5 1 L6.5 4" fill="none" stroke="#555" stroke-width="1.2"/></svg>
<svg class="b" style="left:29.2px;top:337.3px" width="8" height="8" viewBox="0 0 8 8"><rect x="0" y="0" width="8" height="8" rx="1.4" fill="#1a5eb8"/><path d="M1.9 4.1 L3.3 5.5 L6.1 2.5" fill="none" stroke="#fff" stroke-width="0.9"/></svg>
<div class="t" style="left:39.50px;top:337.57px;font-size:7.55px;color:#1e1e1e;">Fusionner les faces tangentes</div>
<div class="b" style="left:25.80px;top:353.00px;width:62.10px;height:22.00px;background:#f6f6f6;border:1px solid #e6e6e6;box-sizing:border-box;"></div>
<div class="t" style="left:38.40px;top:356.19px;font-size:7.3px;color:#9a9a9a;">Faire glisser</div>
<div class="t" style="left:40.70px;top:364.99px;font-size:7.3px;color:#9a9a9a;">l'esquisse</div>
<svg class="b" style="left:92px;top:359px" width="12" height="11" viewBox="0 0 12 11">
<path d="M2.5 3.5 Q6 1 9 3.6 Q10.8 5.6 9.6 9" fill="none" stroke="#a8a8a8" stroke-width="1.3"/>
<path d="M1.2 1.2 L1.8 5.5 L5.5 4.6" fill="none" stroke="#a8a8a8" stroke-width="1.1"/></svg>
<svg class="b" style="left:29.2px;top:382.3px" width="8" height="8" viewBox="0 0 8 8"><rect x="0" y="0" width="8" height="8" rx="1.4" fill="#1a5eb8"/><path d="M1.9 4.1 L3.3 5.5 L6.1 2.5" fill="none" stroke="#fff" stroke-width="0.9"/></svg>
<div class="t" style="left:39.50px;top:381.95px;font-size:7.9px;color:#1e1e1e;">Montrer l'aperçu</div>
<svg class="b" style="left:9.2px;top:404.2px" width="8" height="8" viewBox="0 0 8 8"><rect x="0.5" y="0.5" width="7" height="7" rx="1.2" fill="#fafafa" stroke="#555" stroke-width="0.9"/></svg>
<div class="t" style="left:21.20px;top:404.37px;font-size:7.1px;color:#3a3a3a;font-weight:bold;">Fonction mince</div>
<svg class="b" style="left:149.7px;top:405.5px" width="7" height="5" viewBox="0 0 7 5"><path d="M0.5 1 L3.5 4 L6.5 1" fill="none" stroke="#555" stroke-width="1.2"/></svg>
<div class="t" style="left:9.20px;top:425.68px;font-size:7.2px;color:#3a3a3a;font-weight:bold;">Affichage de la courbure</div>
<svg class="b" style="left:149.7px;top:426.6px" width="7" height="5" viewBox="0 0 7 5"><path d="M0.5 4 L3.5 1 L6.5 4" fill="none" stroke="#555" stroke-width="1.2"/></svg>
<svg class="b" style="left:9.2px;top:439.1px" width="8" height="8" viewBox="0 0 8 8"><rect x="0" y="0" width="8" height="8" rx="1.4" fill="#1a5eb8"/><path d="M1.9 4.1 L3.3 5.5 L6.1 2.5" fill="none" stroke="#fff" stroke-width="0.9"/></svg>
<div class="t" style="left:20.00px;top:439.62px;font-size:7.05px;color:#2a2a2a;font-weight:bold;">Aperçu du maillage</div>
<div class="t" style="left:26.90px;top:450.07px;font-size:8.1px;color:#3a3a3a;">Densité du maillage:</div>
<div class="b" style="left:27.10px;top:462.30px;width:123.80px;height:14.30px;background:#fff;border:1px solid #d2d2d2;box-sizing:border-box;"></div>
<div class="t" style="left:29.80px;top:465.01px;font-size:7.5px;color:#1a1a1a;">19</div>
<div class="b" style="left:140.60px;top:464.30px;width:9.10px;height:10.10px;background:#e4e4e4;border:1px solid #c8c8c8;box-sizing:border-box;"></div>
<svg class="b" style="left:140.6px;top:464.3px" width="9" height="10" viewBox="0 0 9 10">
<path d="M2.6 3.6 L4.5 1.8 L6.4 3.6 Z M2.6 6.4 L4.5 8.2 L6.4 6.4 Z" fill="#111"/></svg>
<div class="b" style="left:27.10px;top:476.40px;width:123.80px;height:5.30px;background:#f8f8f8;border:1px solid #8c8c8c;border-top:1px solid #9a9a9a;box-sizing:border-box;"></div>
<svg class="b" style="left:140px;top:475.5px" width="6" height="9" viewBox="0 0 6 9">
<path d="M0.8 3 L3 0.8 L5.2 3 L5.2 8.2 L0.8 8.2 Z" fill="#f4f8ee" stroke="#7a9a6a" stroke-width="0.6"/></svg>
<svg class="b" style="left:9.2px;top:490.4px" width="8" height="8" viewBox="0 0 8 8"><rect x="0" y="0" width="8" height="8" rx="1.4" fill="#1a5eb8"/><path d="M1.9 4.1 L3.3 5.5 L6.1 2.5" fill="none" stroke="#fff" stroke-width="0.9"/></svg>
<div class="t" style="left:20.00px;top:490.51px;font-size:7.5px;color:#1e1e1e;">Zébrures</div>
<svg class="b" style="left:9.5px;top:506.4px" width="8" height="8" viewBox="0 0 8 8"><rect x="0.5" y="0.5" width="7" height="7" rx="1.2" fill="#fafafa" stroke="#555" stroke-width="0.9"/></svg>
<div class="t" style="left:20.10px;top:506.71px;font-size:7.5px;color:#1e1e1e;">Champs de courbure</div>
<div class="b" style="left:162.00px;top:271.20px;width:5.70px;height:24.00px;background:#f7f7f7;"></div>
<svg class="b" style="left:163px;top:281px" width="5" height="5" viewBox="0 0 5 5"><circle cx="2.2" cy="2.2" r="1.5" fill="#e0e0e0" stroke="#999" stroke-width="0.7"/></svg>
</body></html>
